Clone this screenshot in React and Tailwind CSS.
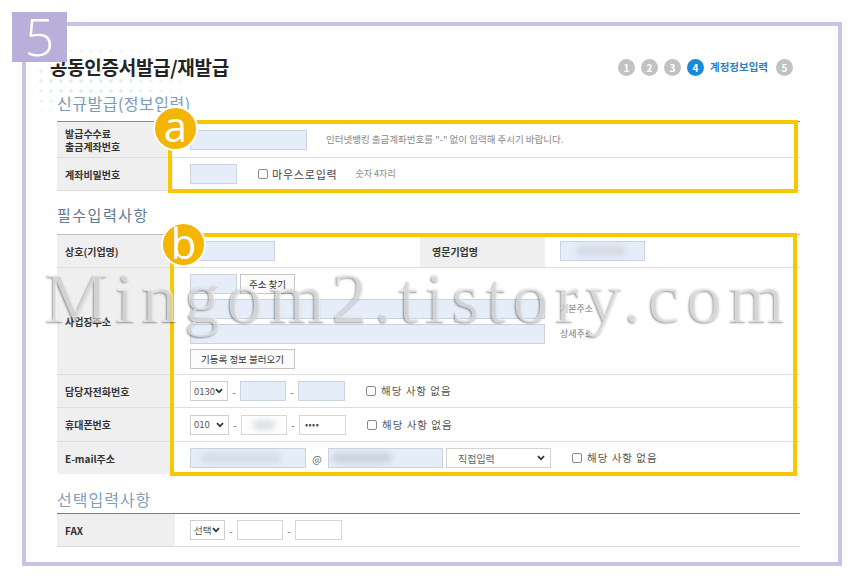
import React from 'react'

function Label({ children, className = '' }) {
  return (
    <div className={`w-[116px] shrink-0 bg-[#efefef] pl-[8px] flex items-center text-[10px] font-bold leading-[13px] text-[#333] ${className}`}>
      {children}
    </div>
  )
}

function Field({ className = '', children }) {
  return <div className={`h-[20px] border border-[#c9d4e0] bg-[#e4edf8] flex items-center ${className}`}>{children}</div>
}

function Smudge({ className = '' }) {
  return <div className={`h-[10px] rounded-full bg-[#b9bec6] blur-[3px] ${className}`} />
}

function Chevron() {
  return (
    <svg width="8" height="6" viewBox="0 0 8 6" className="shrink-0">
      <path d="M1 1.2 4 4.3 7 1.2" fill="none" stroke="#333" strokeWidth="1.8" />
    </svg>
  )
}

function Select({ className = '', label }) {
  return (
    <div className={`h-[20px] border border-[#cfcfcf] bg-white flex items-center justify-between pl-[3px] pr-[4px] text-[9.5px] text-[#555] ${className}`}>
      <span>{label}</span>
      <Chevron />
    </div>
  )
}

function Check({ text, className = '' }) {
  return (
    <div className={`flex items-center gap-[5px] ${className}`}>
      <span className="w-[10px] h-[10px] border border-[#8a8a8a] rounded-[2px] bg-white" />
      <span className="text-[10.5px] tracking-[1px] text-[#555]">{text}</span>
    </div>
  )
}

function Btn({ children, className = '' }) {
  return (
    <div className={`h-[20px] border border-[#c4c4c4] bg-[#fbfbfb] flex items-center justify-center text-[9.5px] text-[#333] ${className}`}>
      {children}
    </div>
  )
}

function Dash() {
  return <span className="w-[12px] text-center text-[10px] text-[#666]">-</span>
}

function Step({ n, active }) {
  return (
    <span className={`w-[17px] h-[17px] rounded-full flex items-center justify-center text-[10px] font-bold text-white ${active ? 'bg-[#1a8ad6]' : 'bg-[#c2c2c2]'}`}>
      {n}
    </span>
  )
}

export default function App() {
  return (
    <div className="relative w-[860px] h-[587px] bg-white overflow-hidden font-['Noto_Sans_CJK_KR','Noto_Sans',sans-serif]">
      {/* faint dotted decoration behind the title */}
      <div className="absolute left-[36px] top-[36px] w-[170px] h-[90px] opacity-70 bg-[radial-gradient(circle,#d3e4f2_1.4px,transparent_2px)] bg-[length:10px_10px] [mask-image:radial-gradient(ellipse_at_30%_50%,black_20%,transparent_70%)]" />

      <div className="relative ml-[22px] mt-[22px] w-[820px] h-[544px] border-4 border-[#c9c2e4] pl-[31px] pr-[38px] pt-[28px]">
        {/* title */}
        <div className="flex items-center justify-between h-[26px] -ml-[7px] pr-[7px]">
          <h1 className="text-[19px] font-bold text-[#222] tracking-[-0.3px]">공동인증서발급/재발급</h1>
          <div className="flex items-center gap-[6px]">
            <Step n="1" />
            <Step n="2" />
            <Step n="3" />
            <Step n="4" active />
            <span className="text-[10.5px] font-bold text-[#2a80c2] mr-[2px]">계정정보입력</span>
            <Step n="5" />
          </div>
        </div>

        {/* 신규발급 */}
        <h2 className="mt-[12px] h-[22px] flex items-center text-[16px] text-[#7d9bb6] tracking-[0.5px]">신규발급(정보입력)</h2>
        <div className="relative mt-[7px] border-t border-[#8a8a8a]">
          <div className="flex h-[36px] border-b border-[#dedede]">
            <Label>발급수수료<br />출금계좌번호</Label>
            <div className="flex items-center pl-[17px]">
              <Field className="w-[117px]" />
              <span className="ml-[19px] text-[9.5px] text-[#888]">인터넷뱅킹 출금계좌번호를 "-" 없이 입력해 주시기 바랍니다.</span>
            </div>
          </div>
          <div className="flex h-[33px] border-b border-[#dedede]">
            <Label>계좌비밀번호</Label>
            <div className="flex items-center pl-[17px]">
              <Field className="w-[47px]" />
              <div className="ml-[21px] flex items-center gap-[4px]">
                <span className="w-[10px] h-[10px] border border-[#8a8a8a] rounded-[2px] bg-white" />
                <span className="text-[11px] tracking-[0.8px] text-[#444]">마우스로입력</span>
              </div>
              <span className="ml-[18px] text-[9px] text-[#888]">숫자 4자리</span>
            </div>
          </div>
          <div className="absolute -top-[2px] left-[111px] right-[2px] -bottom-[2px] border-4 border-[#f7c700]" />
        </div>

        {/* 필수입력사항 */}
        <h2 className="mt-[13px] h-[22px] flex items-center text-[15px] text-[#5f7a92] tracking-[1.5px]">필수입력사항</h2>
        <div className="relative mt-[8px] border-t border-[#bdbdbd]">
          <div className="flex h-[33px] border-b border-[#dedede]">
            <Label>상호(기업명)</Label>
            <div className="w-[247px] flex items-center pl-[17px]">
              <Field className="w-[85px]" />
            </div>
            <Label className="w-[125px] pl-[12px]">영문기업명</Label>
            <div className="flex items-center pl-[15px]">
              <Field className="w-[85px]"><Smudge className="w-[50px] ml-[15px] opacity-40" /></Field>
            </div>
          </div>
          <div className="flex h-[107px] border-b border-[#dedede]">
            <Label>사업장주소</Label>
            <div className="flex flex-col pl-[17px] pt-[6px] gap-[5px]">
              <div className="flex gap-[3px]">
                <Field className="w-[47px]" />
                <Btn className="w-[55px]">주소 찾기</Btn>
              </div>
              <div className="flex items-center">
                <Field className="w-[355px] h-[19px]" />
                <span className="ml-[15px] text-[9px] text-[#777]">기본주소</span>
              </div>
              <div className="flex items-center">
                <Field className="w-[355px] h-[19px]" />
                <span className="ml-[15px] text-[9px] text-[#777]">상세주소</span>
              </div>
              <Btn className="w-[105px]">기등록 정보 불러오기</Btn>
            </div>
          </div>
          <div className="flex h-[33px] border-b border-[#dedede]">
            <Label>담당자전화번호</Label>
            <div className="flex items-center pl-[17px]">
              <Select className="w-[38px]" label="0130" />
              <Dash />
              <Field className="w-[46px]" />
              <Dash />
              <Field className="w-[47px]" />
              <Check className="ml-[21px]" text="해당 사항 없음" />
            </div>
          </div>
          <div className="flex h-[34px] border-b border-[#dedede]">
            <Label>휴대폰번호</Label>
            <div className="flex items-center pl-[17px]">
              <Select className="w-[39px]" label="010" />
              <Dash />
              <div className="h-[20px] w-[46px] border border-[#d6d6d6] bg-white flex items-center">
                <Smudge className="w-[24px] ml-[10px] opacity-50" />
              </div>
              <Dash />
              <div className="h-[20px] w-[47px] border border-[#d6d6d6] bg-white flex items-center pl-[5px] text-[9px] tracking-[0.5px] text-[#444]">••••</div>
              <Check className="ml-[21px]" text="해당 사항 없음" />
            </div>
          </div>
          <div className="flex h-[32px]">
            <Label>E-mail주소</Label>
            <div className="flex items-center pl-[17px]">
              <Field className="w-[116px]"><Smudge className="w-[80px] ml-[10px] opacity-35" /></Field>
              <span className="w-[22px] text-center text-[10px] text-[#666]">@</span>
              <Field className="w-[115px]"><Smudge className="w-[60px] ml-[3px] opacity-60" /></Field>
              <div className="ml-[3px] h-[20px] w-[105px] border border-[#d3d3d3] bg-white flex items-center justify-between pl-[11px] pr-[5px] text-[10px] text-[#666]">
                <span>직접입력</span>
                <Chevron />
              </div>
              <Check className="ml-[21px]" text="해당 사항 없음" />
            </div>
          </div>
          <div className="absolute -top-[2px] left-[113px] right-[3px] -bottom-[2px] border-4 border-[#f7c700]" />
        </div>

        {/* 선택입력사항 */}
        <h2 className="mt-[14px] h-[22px] flex items-center text-[16px] text-[#7fa0bd] tracking-[1px]">선택입력사항</h2>
        <div className="mt-[3px] border-t border-[#7a7a7a] border-b border-b-[#dcdcdc]">
          <div className="flex h-[32px]">
            <Label className="w-[118px]">FAX</Label>
            <div className="flex items-center pl-[15px]">
              <Select className="w-[35px]" label="선택" />
              <Dash />
              <div className="h-[20px] w-[46px] border border-[#d6d6d6] bg-white" />
              <Dash />
              <div className="h-[20px] w-[47px] border border-[#d6d6d6] bg-white" />
            </div>
          </div>
        </div>
      </div>

      {/* step badge */}
      <div className="absolute left-[12px] top-[12px] w-[55px] h-[50px] bg-[#b8afdb] flex items-center justify-center text-[52px] leading-none text-white font-['Open_Sans',sans-serif] font-light pb-[2px]">5</div>

      {/* a / b markers */}
      <div className="absolute left-[153px] top-[106px] w-[45px] h-[45px] rounded-full bg-[#f4b500] border-2 border-white flex items-center justify-center text-[42px] leading-none text-white font-['Open_Sans',sans-serif] pb-[6px]">a</div>
      <div className="absolute left-[161px] top-[222px] w-[45px] h-[45px] rounded-full bg-[#f4b500] border-2 border-white flex items-center justify-center text-[42px] leading-none text-white font-['Open_Sans',sans-serif] pb-[4px]">b</div>

      {/* watermark */}
      <div className="absolute left-[45px] top-[262px] text-[72px] leading-none tracking-[6.5px] text-white/60 font-['Liberation_Serif',serif] [text-shadow:-1px_1px_2px_rgba(0,0,0,0.4)] pointer-events-none whitespace-nowrap">
        Mingom2.tistory.com
      </div>
    </div>
  )
}
